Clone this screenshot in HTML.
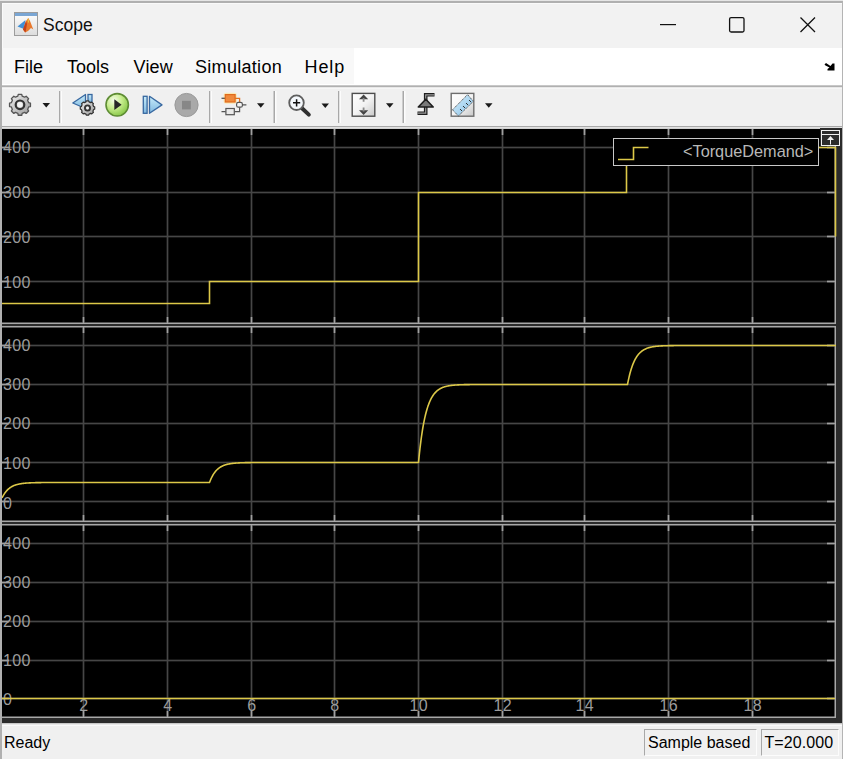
<!DOCTYPE html>
<html><head><meta charset="utf-8">
<style>
html,body{margin:0;padding:0;width:843px;height:759px;overflow:hidden;background:#f0f0f0;}
body{position:relative;font-family:"Liberation Sans",sans-serif;}
.a{position:absolute;}
.t{position:absolute;white-space:nowrap;line-height:1;color:#000;}
.lb{font-family:"Liberation Sans",sans-serif;font-size:16px;letter-spacing:0.4px;fill:#9c9c9c;}
</style></head><body>
<!-- title bar -->
<div class="a" style="left:0;top:0;width:843px;height:48px;background:#f2f2f2"></div>
<div class="a" style="left:0;top:0;width:843px;height:1px;background:#e6e6e6"></div>
<div class="a" style="left:0;top:1px;width:843px;height:2px;background:#b0b0b0"></div>
<div class="a" style="left:2px;top:3px;width:840px;height:1px;background:#fafafa"></div>
<div class="a" style="left:2px;top:3px;width:1px;height:45px;background:#fafafa"></div>
<div class="t" style="left:43px;top:17px;font-size:17.5px;color:#111">Scope</div>


<!-- menu bar -->
<div class="a" style="left:2px;top:48px;width:840px;height:37px;background:#ffffff"></div>
<div class="a" style="left:2px;top:48px;width:352px;height:36px;background:#f8f8f8"></div>
<div class="a" style="left:2px;top:85px;width:840px;height:1px;background:#c8c8c8"></div>
<div class="a" style="left:2px;top:86px;width:840px;height:1px;background:#b0b0b0"></div>
<div class="a" style="left:2px;top:87px;width:840px;height:1px;background:#e8e8e8"></div><div class="a" style="left:2px;top:88px;width:840px;height:1px;background:#f6f6f6"></div>
<div class="t" style="left:14px;top:58px;font-size:18px">File</div>
<div class="t" style="left:67px;top:58px;font-size:18px">Tools</div>
<div class="t" style="left:133.5px;top:58px;font-size:18px;letter-spacing:0.2px">View</div>
<div class="t" style="left:195px;top:58px;font-size:18px;letter-spacing:0.3px">Simulation</div>
<div class="t" style="left:304.5px;top:58px;font-size:18px;letter-spacing:0.9px">Help</div>

<!-- toolbar bottom -->
<div class="a" style="left:2px;top:126px;width:840px;height:1px;background:#a8a8a8"></div>
<div class="a" style="left:2px;top:127px;width:840px;height:1px;background:#e0e0e0"></div>

<svg class="a" style="left:0;top:0" width="843" height="759" viewBox="0 0 843 759">
<defs>
<linearGradient id="gg" x1="0" y1="0" x2="1" y2="1"><stop offset="0" stop-color="#f0f0f0"/><stop offset="1" stop-color="#9a9a9a"/></linearGradient>
<radialGradient id="grn" cx="0.35" cy="0.3" r="0.8"><stop offset="0" stop-color="#f4fce8"/><stop offset="0.45" stop-color="#c6ec8c"/><stop offset="1" stop-color="#7cc03c"/></radialGradient>
<linearGradient id="bl" x1="0" y1="0" x2="0" y2="1"><stop offset="0" stop-color="#c8ecfa"/><stop offset="1" stop-color="#7fb8e0"/></linearGradient>
<linearGradient id="box" x1="0" y1="0" x2="1" y2="1"><stop offset="0" stop-color="#ffffff"/><stop offset="0.5" stop-color="#f4f4f4"/><stop offset="1" stop-color="#c8c8c8"/></linearGradient>
<linearGradient id="mlb" x1="0" y1="0" x2="0" y2="1"><stop offset="0" stop-color="#ffffff"/><stop offset="1" stop-color="#dcdcdc"/></linearGradient>
<linearGradient id="rul" x1="0" y1="0" x2="1" y2="1"><stop offset="0" stop-color="#d8f0fc"/><stop offset="1" stop-color="#86bfe6"/></linearGradient>
</defs>
<g>
<rect x="14.5" y="12.5" width="23" height="23" fill="url(#mlb)" stroke="#9c9c9c" stroke-width="1"/>
<rect x="15" y="13" width="22" height="3" fill="#7aa6d4"/>
<path d="M17.5,26.5 L25.5,20 L24,29 Z" fill="#3f8fd6"/>
<path d="M23,29.5 L26,21 L28.3,18 L30,21 L33.3,29.5 L31,28 L28,31 L25,32.5 Z" fill="#e8782c"/>
<path d="M23,29.5 L26,21 L27,24 L25.5,32.5 Z" fill="#c0401c"/>
<path d="M27.6,19 L28.5,18.5 L29,22 L28,23 Z" fill="#e8d040"/>
</g>
<rect x="660" y="24" width="16" height="1.2" fill="#111"/>
<rect x="729.6" y="17.6" width="14.4" height="14.4" rx="1.5" fill="none" stroke="#111" stroke-width="1.3"/>
<path d="M800.5,17.5 L815,32 M815,17.5 L800.5,32" stroke="#111" stroke-width="1.3"/>
<path d="M824.5,64.5 L826,63 L830.5,66 L832.5,63.5 L834.5,63.5 L834.5,70.5 L827.5,70.5 L827.5,69 L829.5,67.5 L825.5,65.5 Z" fill="#000"/>
<path d="M28.64,102.65 L30.46,103.06 L30.46,106.54 L28.64,106.95 L27.62,109.39 L28.62,110.96 L26.16,113.42 L24.59,112.42 L22.15,113.44 L21.74,115.26 L18.26,115.26 L17.85,113.44 L15.41,112.42 L13.84,113.42 L11.38,110.96 L12.38,109.39 L11.36,106.95 L9.54,106.54 L9.54,103.06 L11.36,102.65 L12.38,100.21 L11.38,98.64 L13.84,96.18 L15.41,97.18 L17.85,96.16 L18.26,94.34 L21.74,94.34 L22.15,96.16 L24.59,97.18 L26.16,96.18 L28.62,98.64 L27.62,100.21 Z" fill="url(#gg)" stroke="#555" stroke-width="1.3" stroke-linejoin="round"/><circle cx="20" cy="104.8" r="4.3" fill="none" stroke="#333" stroke-width="2.2"/><circle cx="20" cy="104.8" r="2.7" fill="#f4f4f4"/>
<path d="M42.5,103 L50.0,103 L46.25,107.5 Z" fill="#1a1a1a"/>
<rect x="59" y="91" width="1.5" height="32" fill="#a8a8a8"/><rect x="60.5" y="91" width="1.5" height="32" fill="#fcfcfc"/>
<path d="M72.8,103 L85.5,94.5 L85.5,108.5 Z" fill="url(#bl)" stroke="#3868a0" stroke-width="1.3" stroke-linejoin="round"/>
<rect x="88" y="94.5" width="4" height="8" fill="url(#bl)" stroke="#3868a0" stroke-width="1.3"/>
<path d="M93.61,106.48 L94.70,106.80 L94.70,109.20 L93.61,109.52 L92.90,111.25 L93.44,112.24 L91.74,113.94 L90.75,113.40 L89.02,114.11 L88.70,115.20 L86.30,115.20 L85.98,114.11 L84.25,113.40 L83.26,113.94 L81.56,112.24 L82.10,111.25 L81.39,109.52 L80.30,109.20 L80.30,106.80 L81.39,106.48 L82.10,104.75 L81.56,103.76 L83.26,102.06 L84.25,102.60 L85.98,101.89 L86.30,100.80 L88.70,100.80 L89.02,101.89 L90.75,102.60 L91.74,102.06 L93.44,103.76 L92.90,104.75 Z" fill="url(#gg)" stroke="#333" stroke-width="1.2" stroke-linejoin="round"/><circle cx="87.5" cy="108" r="2.6" fill="none" stroke="#333" stroke-width="1.8"/><circle cx="87.5" cy="108" r="1.2" fill="#f4f4f4"/>
<circle cx="117.2" cy="104.8" r="11.2" fill="url(#grn)" stroke="#5e8c34" stroke-width="1.6"/>
<path d="M114.3,99.3 L121.6,104.8 L114.3,110 Z" fill="#262626"/>
<rect x="143.3" y="96.3" width="3.8" height="17" fill="url(#bl)" stroke="#3868a0" stroke-width="1.3"/>
<path d="M149.5,96.3 L162,104.9 L149.5,113.3 Z" fill="url(#bl)" stroke="#3868a0" stroke-width="1.3" stroke-linejoin="round"/>
<circle cx="186.5" cy="105" r="11.6" fill="#a9a9a9" stroke="#9a9a9a" stroke-width="1"/>
<rect x="182" y="100.8" width="8.8" height="8.6" fill="#878787"/>
<rect x="209" y="91" width="1.5" height="32" fill="#a8a8a8"/><rect x="210.5" y="91" width="1.5" height="32" fill="#fcfcfc"/>
<rect x="223.5" y="92.8" width="13.5" height="11" rx="3" fill="#fde6a8" opacity="0.8"/>
<path d="M221.5,98.3 L225,98.3" stroke="#555" stroke-width="1.3"/>
<rect x="225.3" y="94.6" width="9.8" height="7.4" fill="#f08a3c" stroke="#e06a1c" stroke-width="1.2"/>
<path d="M235,98.3 L239.6,98.3 L239.6,102.3" fill="none" stroke="#e07020" stroke-width="1.3"/>
<rect x="236.6" y="102.4" width="5.8" height="4.8" rx="1.8" fill="#f4f4f4" stroke="#555" stroke-width="1.2"/>
<path d="M242.4,104.8 L246.4,104.8 M221.5,111.6 L225.8,111.6 M234.5,111.6 L239.6,111.6 L239.6,107.2" fill="none" stroke="#555" stroke-width="1.2"/>
<rect x="225.9" y="108.5" width="8.4" height="6.2" fill="#eaeaea" stroke="#555" stroke-width="1.2"/>
<path d="M257,103.3 L264.5,103.3 L260.75,107.8 Z" fill="#1a1a1a"/>
<rect x="273.5" y="91" width="1.5" height="32" fill="#a8a8a8"/><rect x="275.0" y="91" width="1.5" height="32" fill="#fcfcfc"/>
<path d="M301.5,107.8 L308.8,114.6" stroke="#303030" stroke-width="4" stroke-linecap="round"/>
<circle cx="296.5" cy="102.7" r="7.3" fill="#f4f8fc" stroke="#5e5e5e" stroke-width="1.8"/>
<path d="M293,102.7 L300.2,102.7 M296.6,99.2 L296.6,106.4" stroke="#111" stroke-width="1.5"/>
<path d="M321.5,103.5 L329.0,103.5 L325.25,108.0 Z" fill="#1a1a1a"/>
<rect x="338" y="91" width="1.5" height="32" fill="#a8a8a8"/><rect x="339.5" y="91" width="1.5" height="32" fill="#fcfcfc"/>
<rect x="352.2" y="93.4" width="22.6" height="22.8" fill="url(#box)" stroke="#4e4e4e" stroke-width="1.4"/>
<path d="M359,99.2 L363.6,94.6 L368.2,99.2 Z M359,110.3 L363.6,114.9 L368.2,110.3 Z" fill="#444"/>
<path d="M363.6,98 L363.6,101.8 M363.6,107.6 L363.6,111.5" stroke="#8a8a8a" stroke-width="1.8"/>
<path d="M386,103.3 L393.5,103.3 L389.75,107.8 Z" fill="#1a1a1a"/>
<rect x="402.5" y="91" width="1.5" height="32" fill="#a8a8a8"/><rect x="404.0" y="91" width="1.5" height="32" fill="#fcfcfc"/>
<path d="M417.5,113.2 L425.7,113.2 L425.7,94.8 L434.5,94.8" fill="none" stroke="#1e1e1e" stroke-width="3.6" stroke-linejoin="miter"/>
<path d="M417.5,113.2 L425.7,113.2 L425.7,94.8 L434.5,94.8" fill="none" stroke="#9a9a9a" stroke-width="1.2" stroke-linejoin="miter"/>
<path d="M418.3,107 L425.8,99.2 L433.2,107 Z" fill="#7a7a7a" stroke="#1e1e1e" stroke-width="1.6" stroke-linejoin="round"/>
<rect x="451.2" y="93.4" width="22.6" height="22.8" fill="url(#box)" stroke="#6e6e6e" stroke-width="1.4"/>
<path d="M452.5,109.8 L467.6,94.6 L473.3,101.3 L458.4,116 Z" fill="url(#rul)" stroke="#3c3c3c" stroke-width="0.9" stroke-dasharray="1.2,0.8"/>
<path d="M460,109 L462,111 M463,106 L465,108 M466,103 L468,105 M469,100 L471,102" stroke="#333" stroke-width="1"/>
<path d="M485,103.3 L492.5,103.3 L488.75,107.8 Z" fill="#1a1a1a"/>
</svg>

<!-- status bar -->
<div class="a" style="left:2px;top:723px;width:840px;height:36px;background:#f0f0f0"></div>
<div class="a" style="left:2px;top:723px;width:840px;height:1px;background:#c8c8c8"></div>
<div class="a" style="left:2px;top:724px;width:840px;height:1px;background:#e8e8e8"></div>
<div class="a" style="left:2px;top:725px;width:840px;height:1px;background:#fafafa"></div>
<div class="t" style="left:4px;top:735px;font-size:16px">Ready</div>
<div class="a" style="left:644px;top:729px;width:113px;height:27px;border-top:1px solid #a8a8a8;border-left:1px solid #a8a8a8;border-right:1px solid #fcfcfc;border-bottom:1px solid #fcfcfc;box-sizing:border-box"></div>
<div class="t" style="left:648px;top:735px;font-size:16px">Sample based</div>
<div class="a" style="left:761px;top:729px;width:78px;height:27px;border-top:1px solid #a8a8a8;border-left:1px solid #a8a8a8;border-right:1px solid #fcfcfc;border-bottom:1px solid #fcfcfc;box-sizing:border-box"></div>
<div class="t" style="left:764.5px;top:735px;font-size:16px;letter-spacing:0.1px">T=20.000</div>

<svg class="a" style="left:0;top:0" width="843" height="759" viewBox="0 0 843 759" shape-rendering="crispEdges">
<rect x="2" y="128" width="840" height="595" fill="#2b2b2b"/>
<rect x="2" y="128" width="834" height="1" fill="#d0d0d0"/>
<rect x="2" y="129" width="833" height="194" fill="#000"/>
<rect x="2" y="322.5" width="834" height="1.5" fill="#a8a8a8" shape-rendering="auto"/>
<rect x="834.5" y="128" width="1.5" height="196" fill="#a8a8a8" shape-rendering="auto"/>
<rect x="82.65" y="129" width="1.7" height="194" fill="#464646" shape-rendering="auto"/>
<rect x="82.65" y="129" width="1.7" height="6" fill="#a0a0a0" shape-rendering="auto"/>
<rect x="82.65" y="317" width="1.7" height="6" fill="#a0a0a0" shape-rendering="auto"/>
<rect x="166.65" y="129" width="1.7" height="194" fill="#464646" shape-rendering="auto"/>
<rect x="166.65" y="129" width="1.7" height="6" fill="#a0a0a0" shape-rendering="auto"/>
<rect x="166.65" y="317" width="1.7" height="6" fill="#a0a0a0" shape-rendering="auto"/>
<rect x="250.65" y="129" width="1.7" height="194" fill="#464646" shape-rendering="auto"/>
<rect x="250.65" y="129" width="1.7" height="6" fill="#a0a0a0" shape-rendering="auto"/>
<rect x="250.65" y="317" width="1.7" height="6" fill="#a0a0a0" shape-rendering="auto"/>
<rect x="333.65" y="129" width="1.7" height="194" fill="#464646" shape-rendering="auto"/>
<rect x="333.65" y="129" width="1.7" height="6" fill="#a0a0a0" shape-rendering="auto"/>
<rect x="333.65" y="317" width="1.7" height="6" fill="#a0a0a0" shape-rendering="auto"/>
<rect x="417.65" y="129" width="1.7" height="194" fill="#464646" shape-rendering="auto"/>
<rect x="417.65" y="129" width="1.7" height="6" fill="#a0a0a0" shape-rendering="auto"/>
<rect x="417.65" y="317" width="1.7" height="6" fill="#a0a0a0" shape-rendering="auto"/>
<rect x="501.65" y="129" width="1.7" height="194" fill="#464646" shape-rendering="auto"/>
<rect x="501.65" y="129" width="1.7" height="6" fill="#a0a0a0" shape-rendering="auto"/>
<rect x="501.65" y="317" width="1.7" height="6" fill="#a0a0a0" shape-rendering="auto"/>
<rect x="583.65" y="129" width="1.7" height="194" fill="#464646" shape-rendering="auto"/>
<rect x="583.65" y="129" width="1.7" height="6" fill="#a0a0a0" shape-rendering="auto"/>
<rect x="583.65" y="317" width="1.7" height="6" fill="#a0a0a0" shape-rendering="auto"/>
<rect x="667.65" y="129" width="1.7" height="194" fill="#464646" shape-rendering="auto"/>
<rect x="667.65" y="129" width="1.7" height="6" fill="#a0a0a0" shape-rendering="auto"/>
<rect x="667.65" y="317" width="1.7" height="6" fill="#a0a0a0" shape-rendering="auto"/>
<rect x="751.65" y="129" width="1.7" height="194" fill="#464646" shape-rendering="auto"/>
<rect x="751.65" y="129" width="1.7" height="6" fill="#a0a0a0" shape-rendering="auto"/>
<rect x="751.65" y="317" width="1.7" height="6" fill="#a0a0a0" shape-rendering="auto"/>
<rect x="2" y="146.65" width="833" height="1.7" fill="#464646" shape-rendering="auto"/>
<rect x="2" y="146.65" width="7" height="1.7" fill="#a0a0a0" shape-rendering="auto"/>
<rect x="827" y="146.65" width="8" height="1.7" fill="#a0a0a0" shape-rendering="auto"/>
<rect x="2" y="191.65" width="833" height="1.7" fill="#464646" shape-rendering="auto"/>
<rect x="2" y="191.65" width="7" height="1.7" fill="#a0a0a0" shape-rendering="auto"/>
<rect x="827" y="191.65" width="8" height="1.7" fill="#a0a0a0" shape-rendering="auto"/>
<rect x="2" y="235.65" width="833" height="1.7" fill="#464646" shape-rendering="auto"/>
<rect x="2" y="235.65" width="7" height="1.7" fill="#a0a0a0" shape-rendering="auto"/>
<rect x="827" y="235.65" width="8" height="1.7" fill="#a0a0a0" shape-rendering="auto"/>
<rect x="2" y="280.65" width="833" height="1.7" fill="#464646" shape-rendering="auto"/>
<rect x="2" y="280.65" width="7" height="1.7" fill="#a0a0a0" shape-rendering="auto"/>
<rect x="827" y="280.65" width="8" height="1.7" fill="#a0a0a0" shape-rendering="auto"/>
<text x="3" y="153" class="lb">400</text>
<text x="3" y="198" class="lb">300</text>
<text x="3" y="243" class="lb">200</text>
<text x="3" y="288" class="lb">100</text>
<rect x="2" y="327" width="833" height="194" fill="#000"/>
<rect x="2" y="326" width="834" height="1.5" fill="#a8a8a8" shape-rendering="auto"/>
<rect x="2" y="520.5" width="834" height="1.5" fill="#a8a8a8" shape-rendering="auto"/>
<rect x="834.5" y="326" width="1.5" height="196" fill="#a8a8a8" shape-rendering="auto"/>
<rect x="82.65" y="327" width="1.7" height="194" fill="#464646" shape-rendering="auto"/>
<rect x="82.65" y="327" width="1.7" height="6" fill="#a0a0a0" shape-rendering="auto"/>
<rect x="82.65" y="515" width="1.7" height="6" fill="#a0a0a0" shape-rendering="auto"/>
<rect x="166.65" y="327" width="1.7" height="194" fill="#464646" shape-rendering="auto"/>
<rect x="166.65" y="327" width="1.7" height="6" fill="#a0a0a0" shape-rendering="auto"/>
<rect x="166.65" y="515" width="1.7" height="6" fill="#a0a0a0" shape-rendering="auto"/>
<rect x="250.65" y="327" width="1.7" height="194" fill="#464646" shape-rendering="auto"/>
<rect x="250.65" y="327" width="1.7" height="6" fill="#a0a0a0" shape-rendering="auto"/>
<rect x="250.65" y="515" width="1.7" height="6" fill="#a0a0a0" shape-rendering="auto"/>
<rect x="333.65" y="327" width="1.7" height="194" fill="#464646" shape-rendering="auto"/>
<rect x="333.65" y="327" width="1.7" height="6" fill="#a0a0a0" shape-rendering="auto"/>
<rect x="333.65" y="515" width="1.7" height="6" fill="#a0a0a0" shape-rendering="auto"/>
<rect x="417.65" y="327" width="1.7" height="194" fill="#464646" shape-rendering="auto"/>
<rect x="417.65" y="327" width="1.7" height="6" fill="#a0a0a0" shape-rendering="auto"/>
<rect x="417.65" y="515" width="1.7" height="6" fill="#a0a0a0" shape-rendering="auto"/>
<rect x="501.65" y="327" width="1.7" height="194" fill="#464646" shape-rendering="auto"/>
<rect x="501.65" y="327" width="1.7" height="6" fill="#a0a0a0" shape-rendering="auto"/>
<rect x="501.65" y="515" width="1.7" height="6" fill="#a0a0a0" shape-rendering="auto"/>
<rect x="583.65" y="327" width="1.7" height="194" fill="#464646" shape-rendering="auto"/>
<rect x="583.65" y="327" width="1.7" height="6" fill="#a0a0a0" shape-rendering="auto"/>
<rect x="583.65" y="515" width="1.7" height="6" fill="#a0a0a0" shape-rendering="auto"/>
<rect x="667.65" y="327" width="1.7" height="194" fill="#464646" shape-rendering="auto"/>
<rect x="667.65" y="327" width="1.7" height="6" fill="#a0a0a0" shape-rendering="auto"/>
<rect x="667.65" y="515" width="1.7" height="6" fill="#a0a0a0" shape-rendering="auto"/>
<rect x="751.65" y="327" width="1.7" height="194" fill="#464646" shape-rendering="auto"/>
<rect x="751.65" y="327" width="1.7" height="6" fill="#a0a0a0" shape-rendering="auto"/>
<rect x="751.65" y="515" width="1.7" height="6" fill="#a0a0a0" shape-rendering="auto"/>
<rect x="2" y="344.65" width="833" height="1.7" fill="#464646" shape-rendering="auto"/>
<rect x="2" y="344.65" width="7" height="1.7" fill="#a0a0a0" shape-rendering="auto"/>
<rect x="827" y="344.65" width="8" height="1.7" fill="#a0a0a0" shape-rendering="auto"/>
<rect x="2" y="383.65" width="833" height="1.7" fill="#464646" shape-rendering="auto"/>
<rect x="2" y="383.65" width="7" height="1.7" fill="#a0a0a0" shape-rendering="auto"/>
<rect x="827" y="383.65" width="8" height="1.7" fill="#a0a0a0" shape-rendering="auto"/>
<rect x="2" y="422.65" width="833" height="1.7" fill="#464646" shape-rendering="auto"/>
<rect x="2" y="422.65" width="7" height="1.7" fill="#a0a0a0" shape-rendering="auto"/>
<rect x="827" y="422.65" width="8" height="1.7" fill="#a0a0a0" shape-rendering="auto"/>
<rect x="2" y="461.65" width="833" height="1.7" fill="#464646" shape-rendering="auto"/>
<rect x="2" y="461.65" width="7" height="1.7" fill="#a0a0a0" shape-rendering="auto"/>
<rect x="827" y="461.65" width="8" height="1.7" fill="#a0a0a0" shape-rendering="auto"/>
<rect x="2" y="500.65" width="833" height="1.7" fill="#464646" shape-rendering="auto"/>
<rect x="2" y="500.65" width="7" height="1.7" fill="#a0a0a0" shape-rendering="auto"/>
<rect x="827" y="500.65" width="8" height="1.7" fill="#a0a0a0" shape-rendering="auto"/>
<text x="3" y="351" class="lb">400</text>
<text x="3" y="390" class="lb">300</text>
<text x="3" y="429" class="lb">200</text>
<text x="3" y="469" class="lb">100</text>
<text x="3" y="509" class="lb">0</text>
<rect x="2" y="525" width="833" height="192" fill="#000"/>
<rect x="2" y="524" width="834" height="1.5" fill="#a8a8a8" shape-rendering="auto"/>
<rect x="2" y="716.5" width="834" height="1.5" fill="#a8a8a8" shape-rendering="auto"/>
<rect x="834.5" y="524" width="1.5" height="194" fill="#a8a8a8" shape-rendering="auto"/>
<rect x="82.65" y="525" width="1.7" height="192" fill="#464646" shape-rendering="auto"/>
<rect x="82.65" y="525" width="1.7" height="6" fill="#a0a0a0" shape-rendering="auto"/>
<rect x="82.65" y="711" width="1.7" height="6" fill="#a0a0a0" shape-rendering="auto"/>
<rect x="166.65" y="525" width="1.7" height="192" fill="#464646" shape-rendering="auto"/>
<rect x="166.65" y="525" width="1.7" height="6" fill="#a0a0a0" shape-rendering="auto"/>
<rect x="166.65" y="711" width="1.7" height="6" fill="#a0a0a0" shape-rendering="auto"/>
<rect x="250.65" y="525" width="1.7" height="192" fill="#464646" shape-rendering="auto"/>
<rect x="250.65" y="525" width="1.7" height="6" fill="#a0a0a0" shape-rendering="auto"/>
<rect x="250.65" y="711" width="1.7" height="6" fill="#a0a0a0" shape-rendering="auto"/>
<rect x="333.65" y="525" width="1.7" height="192" fill="#464646" shape-rendering="auto"/>
<rect x="333.65" y="525" width="1.7" height="6" fill="#a0a0a0" shape-rendering="auto"/>
<rect x="333.65" y="711" width="1.7" height="6" fill="#a0a0a0" shape-rendering="auto"/>
<rect x="417.65" y="525" width="1.7" height="192" fill="#464646" shape-rendering="auto"/>
<rect x="417.65" y="525" width="1.7" height="6" fill="#a0a0a0" shape-rendering="auto"/>
<rect x="417.65" y="711" width="1.7" height="6" fill="#a0a0a0" shape-rendering="auto"/>
<rect x="501.65" y="525" width="1.7" height="192" fill="#464646" shape-rendering="auto"/>
<rect x="501.65" y="525" width="1.7" height="6" fill="#a0a0a0" shape-rendering="auto"/>
<rect x="501.65" y="711" width="1.7" height="6" fill="#a0a0a0" shape-rendering="auto"/>
<rect x="583.65" y="525" width="1.7" height="192" fill="#464646" shape-rendering="auto"/>
<rect x="583.65" y="525" width="1.7" height="6" fill="#a0a0a0" shape-rendering="auto"/>
<rect x="583.65" y="711" width="1.7" height="6" fill="#a0a0a0" shape-rendering="auto"/>
<rect x="667.65" y="525" width="1.7" height="192" fill="#464646" shape-rendering="auto"/>
<rect x="667.65" y="525" width="1.7" height="6" fill="#a0a0a0" shape-rendering="auto"/>
<rect x="667.65" y="711" width="1.7" height="6" fill="#a0a0a0" shape-rendering="auto"/>
<rect x="751.65" y="525" width="1.7" height="192" fill="#464646" shape-rendering="auto"/>
<rect x="751.65" y="525" width="1.7" height="6" fill="#a0a0a0" shape-rendering="auto"/>
<rect x="751.65" y="711" width="1.7" height="6" fill="#a0a0a0" shape-rendering="auto"/>
<rect x="2" y="542.65" width="833" height="1.7" fill="#464646" shape-rendering="auto"/>
<rect x="2" y="542.65" width="7" height="1.7" fill="#a0a0a0" shape-rendering="auto"/>
<rect x="827" y="542.65" width="8" height="1.7" fill="#a0a0a0" shape-rendering="auto"/>
<rect x="2" y="581.65" width="833" height="1.7" fill="#464646" shape-rendering="auto"/>
<rect x="2" y="581.65" width="7" height="1.7" fill="#a0a0a0" shape-rendering="auto"/>
<rect x="827" y="581.65" width="8" height="1.7" fill="#a0a0a0" shape-rendering="auto"/>
<rect x="2" y="620.65" width="833" height="1.7" fill="#464646" shape-rendering="auto"/>
<rect x="2" y="620.65" width="7" height="1.7" fill="#a0a0a0" shape-rendering="auto"/>
<rect x="827" y="620.65" width="8" height="1.7" fill="#a0a0a0" shape-rendering="auto"/>
<rect x="2" y="659.65" width="833" height="1.7" fill="#464646" shape-rendering="auto"/>
<rect x="2" y="659.65" width="7" height="1.7" fill="#a0a0a0" shape-rendering="auto"/>
<rect x="827" y="659.65" width="8" height="1.7" fill="#a0a0a0" shape-rendering="auto"/>
<rect x="2" y="697.65" width="833" height="1.7" fill="#464646" shape-rendering="auto"/>
<rect x="2" y="697.65" width="7" height="1.7" fill="#a0a0a0" shape-rendering="auto"/>
<rect x="827" y="697.65" width="8" height="1.7" fill="#a0a0a0" shape-rendering="auto"/>
<text x="3" y="549" class="lb">400</text>
<text x="3" y="588" class="lb">300</text>
<text x="3" y="627" class="lb">200</text>
<text x="3" y="666" class="lb">100</text>
<text x="3" y="705" class="lb">0</text>
<text x="83.85" y="711" class="lb" text-anchor="middle">2</text>
<text x="167.85" y="711" class="lb" text-anchor="middle">4</text>
<text x="251.85" y="711" class="lb" text-anchor="middle">6</text>
<text x="334.85" y="711" class="lb" text-anchor="middle">8</text>
<text x="418.85" y="711" class="lb" text-anchor="middle">10</text>
<text x="502.85" y="711" class="lb" text-anchor="middle">12</text>
<text x="584.85" y="711" class="lb" text-anchor="middle">14</text>
<text x="668.85" y="711" class="lb" text-anchor="middle">16</text>
<text x="752.85" y="711" class="lb" text-anchor="middle">18</text>
<path d="M2.00,303.50 L209.50,303.50 L209.50,281.50 L418.50,281.50 L418.50,192.50 L626.50,192.50 L626.50,147.50 L835.50,147.50 L835.50,236.50" fill="none" stroke="#dcc848" stroke-width="1.6" shape-rendering="auto"/>
<path d="M2.00,498.01 L2.50,497.00 L3.00,496.05 L3.50,495.17 L4.00,494.34 L4.50,493.57 L5.00,492.84 L5.50,492.17 L6.00,491.54 L6.50,490.95 L7.00,490.39 L7.50,489.88 L8.00,489.40 L8.50,488.95 L9.00,488.52 L9.50,488.13 L10.00,487.76 L10.50,487.42 L11.00,487.10 L11.50,486.80 L12.00,486.52 L12.50,486.25 L13.00,486.01 L13.50,485.78 L14.00,485.57 L14.50,485.36 L15.00,485.18 L15.50,485.00 L16.00,484.84 L16.50,484.69 L17.00,484.54 L17.50,484.41 L18.00,484.29 L18.50,484.17 L19.00,484.06 L19.50,483.96 L20.00,483.86 L20.50,483.77 L21.00,483.69 L21.50,483.61 L22.00,483.54 L22.50,483.47 L23.00,483.41 L23.50,483.35 L24.00,483.29 L24.50,483.24 L25.00,483.19 L25.50,483.15 L26.00,483.11 L26.50,483.07 L27.00,483.03 L27.50,482.99 L28.00,482.96 L28.50,482.93 L29.00,482.90 L29.50,482.88 L30.00,482.85 L30.50,482.83 L31.00,482.81 L31.50,482.79 L32.00,482.77 L32.50,482.75 L33.00,482.74 L33.50,482.72 L34.00,482.71 L34.50,482.69 L35.00,482.68 L35.50,482.67 L36.00,482.66 L36.50,482.65 L37.00,482.64 L37.50,482.63 L38.00,482.62 L38.50,482.61 L39.00,482.60 L39.50,482.60 L40.00,482.59 L40.50,482.59 L41.00,482.58 L41.50,482.57 L42.00,482.57 L42.50,482.57 L43.00,482.56 L43.50,482.56 L44.00,482.55 L44.50,482.55 L45.00,482.55 L45.50,482.54 L46.00,482.54 L46.50,482.54 L47.00,482.54 L47.50,482.53 L48.00,482.53 L48.50,482.53 L49.00,482.53 L49.50,482.53 L50.00,482.52 L50.50,482.52 L51.00,482.52 L51.50,482.52 L52.00,482.52 L52.50,482.52 L53.00,482.52 L53.50,482.51 L54.00,482.51 L54.50,482.51 L55.00,482.51 L55.50,482.51 L56.00,482.51 L56.50,482.51 L57.00,482.51 L57.50,482.51 L58.00,482.51 L58.50,482.51 L59.00,482.51 L59.50,482.51 L60.00,482.51 L60.50,482.51 L61.00,482.51 L61.50,482.50 L62.00,482.50 L62.50,482.50 L63.00,482.50 L63.50,482.50 L64.00,482.50 L64.50,482.50 L65.00,482.50 L65.50,482.50 L66.00,482.50 L66.50,482.50 L67.00,482.50 L67.50,482.50 L68.00,482.50 L68.50,482.50 L69.00,482.50 L69.50,482.50 L70.00,482.50 L70.50,482.50 L71.00,482.50 L71.50,482.50 L72.00,482.50 L72.50,482.50 L73.00,482.50 L73.50,482.50 L74.00,482.50 L74.50,482.50 L75.00,482.50 L75.50,482.50 L76.00,482.50 L76.50,482.50 L77.00,482.50 L77.50,482.50 L78.00,482.50 L78.50,482.50 L79.00,482.50 L79.50,482.50 L80.00,482.50 L80.50,482.50 L81.00,482.50 L81.50,482.50 L82.00,482.50 L82.50,482.50 L83.00,482.50 L83.50,482.50 L84.00,482.50 L84.50,482.50 L85.00,482.50 L85.50,482.50 L86.00,482.50 L86.50,482.50 L87.00,482.50 L87.50,482.50 L88.00,482.50 L88.50,482.50 L89.00,482.50 L89.50,482.50 L90.00,482.50 L90.50,482.50 L91.00,482.50 L91.50,482.50 L92.00,482.50 L92.50,482.50 L93.00,482.50 L93.50,482.50 L94.00,482.50 L94.50,482.50 L95.00,482.50 L95.50,482.50 L96.00,482.50 L96.50,482.50 L97.00,482.50 L97.50,482.50 L98.00,482.50 L98.50,482.50 L99.00,482.50 L99.50,482.50 L100.00,482.50 L100.50,482.50 L101.00,482.50 L101.50,482.50 L102.00,482.50 L102.50,482.50 L103.00,482.50 L103.50,482.50 L104.00,482.50 L104.50,482.50 L105.00,482.50 L105.50,482.50 L106.00,482.50 L106.50,482.50 L107.00,482.50 L107.50,482.50 L108.00,482.50 L108.50,482.50 L109.00,482.50 L109.50,482.50 L110.00,482.50 L110.50,482.50 L111.00,482.50 L111.50,482.50 L112.00,482.50 L112.50,482.50 L113.00,482.50 L113.50,482.50 L114.00,482.50 L114.50,482.50 L115.00,482.50 L115.50,482.50 L116.00,482.50 L116.50,482.50 L117.00,482.50 L117.50,482.50 L118.00,482.50 L118.50,482.50 L119.00,482.50 L119.50,482.50 L120.00,482.50 L120.50,482.50 L121.00,482.50 L121.50,482.50 L122.00,482.50 L122.50,482.50 L123.00,482.50 L123.50,482.50 L124.00,482.50 L124.50,482.50 L125.00,482.50 L125.50,482.50 L126.00,482.50 L126.50,482.50 L127.00,482.50 L127.50,482.50 L128.00,482.50 L128.50,482.50 L129.00,482.50 L129.50,482.50 L130.00,482.50 L130.50,482.50 L131.00,482.50 L131.50,482.50 L132.00,482.50 L132.50,482.50 L133.00,482.50 L133.50,482.50 L134.00,482.50 L134.50,482.50 L135.00,482.50 L135.50,482.50 L136.00,482.50 L136.50,482.50 L137.00,482.50 L137.50,482.50 L138.00,482.50 L138.50,482.50 L139.00,482.50 L139.50,482.50 L140.00,482.50 L140.50,482.50 L141.00,482.50 L141.50,482.50 L142.00,482.50 L142.50,482.50 L143.00,482.50 L143.50,482.50 L144.00,482.50 L144.50,482.50 L145.00,482.50 L145.50,482.50 L146.00,482.50 L146.50,482.50 L147.00,482.50 L147.50,482.50 L148.00,482.50 L148.50,482.50 L149.00,482.50 L149.50,482.50 L150.00,482.50 L150.50,482.50 L151.00,482.50 L151.50,482.50 L152.00,482.50 L152.50,482.50 L153.00,482.50 L153.50,482.50 L154.00,482.50 L154.50,482.50 L155.00,482.50 L155.50,482.50 L156.00,482.50 L156.50,482.50 L157.00,482.50 L157.50,482.50 L158.00,482.50 L158.50,482.50 L159.00,482.50 L159.50,482.50 L160.00,482.50 L160.50,482.50 L161.00,482.50 L161.50,482.50 L162.00,482.50 L162.50,482.50 L163.00,482.50 L163.50,482.50 L164.00,482.50 L164.50,482.50 L165.00,482.50 L165.50,482.50 L166.00,482.50 L166.50,482.50 L167.00,482.50 L167.50,482.50 L168.00,482.50 L168.50,482.50 L169.00,482.50 L169.50,482.50 L170.00,482.50 L170.50,482.50 L171.00,482.50 L171.50,482.50 L172.00,482.50 L172.50,482.50 L173.00,482.50 L173.50,482.50 L174.00,482.50 L174.50,482.50 L175.00,482.50 L175.50,482.50 L176.00,482.50 L176.50,482.50 L177.00,482.50 L177.50,482.50 L178.00,482.50 L178.50,482.50 L179.00,482.50 L179.50,482.50 L180.00,482.50 L180.50,482.50 L181.00,482.50 L181.50,482.50 L182.00,482.50 L182.50,482.50 L183.00,482.50 L183.50,482.50 L184.00,482.50 L184.50,482.50 L185.00,482.50 L185.50,482.50 L186.00,482.50 L186.50,482.50 L187.00,482.50 L187.50,482.50 L188.00,482.50 L188.50,482.50 L189.00,482.50 L189.50,482.50 L190.00,482.50 L190.50,482.50 L191.00,482.50 L191.50,482.50 L192.00,482.50 L192.50,482.50 L193.00,482.50 L193.50,482.50 L194.00,482.50 L194.50,482.50 L195.00,482.50 L195.50,482.50 L196.00,482.50 L196.50,482.50 L197.00,482.50 L197.50,482.50 L198.00,482.50 L198.50,482.50 L199.00,482.50 L199.50,482.50 L200.00,482.50 L200.50,482.50 L201.00,482.50 L201.50,482.50 L202.00,482.50 L202.50,482.50 L203.00,482.50 L203.50,482.50 L204.00,482.50 L204.50,482.50 L205.00,482.50 L205.50,482.50 L206.00,482.50 L206.50,482.50 L207.00,482.50 L207.50,482.50 L208.00,482.50 L208.50,482.50 L209.00,482.50 L209.50,482.50 L209.50,482.50 L210.00,481.19 L210.50,479.97 L211.00,478.83 L211.50,477.76 L212.00,476.77 L212.50,475.83 L213.00,474.96 L213.50,474.15 L214.00,473.39 L214.50,472.68 L215.00,472.01 L215.50,471.39 L216.00,470.81 L216.50,470.27 L217.00,469.76 L217.50,469.28 L218.00,468.84 L218.50,468.43 L219.00,468.04 L219.50,467.68 L220.00,467.34 L220.50,467.02 L221.00,466.73 L221.50,466.45 L222.00,466.19 L222.50,465.95 L223.00,465.73 L223.50,465.52 L224.00,465.32 L224.50,465.13 L225.00,464.96 L225.50,464.80 L226.00,464.65 L226.50,464.51 L227.00,464.38 L227.50,464.26 L228.00,464.14 L228.50,464.03 L229.00,463.93 L229.50,463.84 L230.00,463.75 L230.50,463.67 L231.00,463.59 L231.50,463.52 L232.00,463.46 L232.50,463.39 L233.00,463.34 L233.50,463.28 L234.00,463.23 L234.50,463.18 L235.00,463.14 L235.50,463.10 L236.00,463.06 L236.50,463.02 L237.00,462.99 L237.50,462.95 L238.00,462.93 L238.50,462.90 L239.00,462.87 L239.50,462.85 L240.00,462.82 L240.50,462.80 L241.00,462.78 L241.50,462.76 L242.00,462.75 L242.50,462.73 L243.00,462.72 L243.50,462.70 L244.00,462.69 L244.50,462.68 L245.00,462.67 L245.50,462.65 L246.00,462.64 L246.50,462.63 L247.00,462.63 L247.50,462.62 L248.00,462.61 L248.50,462.60 L249.00,462.60 L249.50,462.59 L250.00,462.58 L250.50,462.58 L251.00,462.57 L251.50,462.57 L252.00,462.56 L252.50,462.56 L253.00,462.56 L253.50,462.55 L254.00,462.55 L254.50,462.55 L255.00,462.54 L255.50,462.54 L256.00,462.54 L256.50,462.53 L257.00,462.53 L257.50,462.53 L258.00,462.53 L258.50,462.53 L259.00,462.52 L259.50,462.52 L260.00,462.52 L260.50,462.52 L261.00,462.52 L261.50,462.52 L262.00,462.52 L262.50,462.52 L263.00,462.51 L263.50,462.51 L264.00,462.51 L264.50,462.51 L265.00,462.51 L265.50,462.51 L266.00,462.51 L266.50,462.51 L267.00,462.51 L267.50,462.51 L268.00,462.51 L268.50,462.51 L269.00,462.51 L269.50,462.51 L270.00,462.51 L270.50,462.51 L271.00,462.50 L271.50,462.50 L272.00,462.50 L272.50,462.50 L273.00,462.50 L273.50,462.50 L274.00,462.50 L274.50,462.50 L275.00,462.50 L275.50,462.50 L276.00,462.50 L276.50,462.50 L277.00,462.50 L277.50,462.50 L278.00,462.50 L278.50,462.50 L279.00,462.50 L279.50,462.50 L280.00,462.50 L280.50,462.50 L281.00,462.50 L281.50,462.50 L282.00,462.50 L282.50,462.50 L283.00,462.50 L283.50,462.50 L284.00,462.50 L284.50,462.50 L285.00,462.50 L285.50,462.50 L286.00,462.50 L286.50,462.50 L287.00,462.50 L287.50,462.50 L288.00,462.50 L288.50,462.50 L289.00,462.50 L289.50,462.50 L290.00,462.50 L290.50,462.50 L291.00,462.50 L291.50,462.50 L292.00,462.50 L292.50,462.50 L293.00,462.50 L293.50,462.50 L294.00,462.50 L294.50,462.50 L295.00,462.50 L295.50,462.50 L296.00,462.50 L296.50,462.50 L297.00,462.50 L297.50,462.50 L298.00,462.50 L298.50,462.50 L299.00,462.50 L299.50,462.50 L300.00,462.50 L300.50,462.50 L301.00,462.50 L301.50,462.50 L302.00,462.50 L302.50,462.50 L303.00,462.50 L303.50,462.50 L304.00,462.50 L304.50,462.50 L305.00,462.50 L305.50,462.50 L306.00,462.50 L306.50,462.50 L307.00,462.50 L307.50,462.50 L308.00,462.50 L308.50,462.50 L309.00,462.50 L309.50,462.50 L310.00,462.50 L310.50,462.50 L311.00,462.50 L311.50,462.50 L312.00,462.50 L312.50,462.50 L313.00,462.50 L313.50,462.50 L314.00,462.50 L314.50,462.50 L315.00,462.50 L315.50,462.50 L316.00,462.50 L316.50,462.50 L317.00,462.50 L317.50,462.50 L318.00,462.50 L318.50,462.50 L319.00,462.50 L319.50,462.50 L320.00,462.50 L320.50,462.50 L321.00,462.50 L321.50,462.50 L322.00,462.50 L322.50,462.50 L323.00,462.50 L323.50,462.50 L324.00,462.50 L324.50,462.50 L325.00,462.50 L325.50,462.50 L326.00,462.50 L326.50,462.50 L327.00,462.50 L327.50,462.50 L328.00,462.50 L328.50,462.50 L329.00,462.50 L329.50,462.50 L330.00,462.50 L330.50,462.50 L331.00,462.50 L331.50,462.50 L332.00,462.50 L332.50,462.50 L333.00,462.50 L333.50,462.50 L334.00,462.50 L334.50,462.50 L335.00,462.50 L335.50,462.50 L336.00,462.50 L336.50,462.50 L337.00,462.50 L337.50,462.50 L338.00,462.50 L338.50,462.50 L339.00,462.50 L339.50,462.50 L340.00,462.50 L340.50,462.50 L341.00,462.50 L341.50,462.50 L342.00,462.50 L342.50,462.50 L343.00,462.50 L343.50,462.50 L344.00,462.50 L344.50,462.50 L345.00,462.50 L345.50,462.50 L346.00,462.50 L346.50,462.50 L347.00,462.50 L347.50,462.50 L348.00,462.50 L348.50,462.50 L349.00,462.50 L349.50,462.50 L350.00,462.50 L350.50,462.50 L351.00,462.50 L351.50,462.50 L352.00,462.50 L352.50,462.50 L353.00,462.50 L353.50,462.50 L354.00,462.50 L354.50,462.50 L355.00,462.50 L355.50,462.50 L356.00,462.50 L356.50,462.50 L357.00,462.50 L357.50,462.50 L358.00,462.50 L358.50,462.50 L359.00,462.50 L359.50,462.50 L360.00,462.50 L360.50,462.50 L361.00,462.50 L361.50,462.50 L362.00,462.50 L362.50,462.50 L363.00,462.50 L363.50,462.50 L364.00,462.50 L364.50,462.50 L365.00,462.50 L365.50,462.50 L366.00,462.50 L366.50,462.50 L367.00,462.50 L367.50,462.50 L368.00,462.50 L368.50,462.50 L369.00,462.50 L369.50,462.50 L370.00,462.50 L370.50,462.50 L371.00,462.50 L371.50,462.50 L372.00,462.50 L372.50,462.50 L373.00,462.50 L373.50,462.50 L374.00,462.50 L374.50,462.50 L375.00,462.50 L375.50,462.50 L376.00,462.50 L376.50,462.50 L377.00,462.50 L377.50,462.50 L378.00,462.50 L378.50,462.50 L379.00,462.50 L379.50,462.50 L380.00,462.50 L380.50,462.50 L381.00,462.50 L381.50,462.50 L382.00,462.50 L382.50,462.50 L383.00,462.50 L383.50,462.50 L384.00,462.50 L384.50,462.50 L385.00,462.50 L385.50,462.50 L386.00,462.50 L386.50,462.50 L387.00,462.50 L387.50,462.50 L388.00,462.50 L388.50,462.50 L389.00,462.50 L389.50,462.50 L390.00,462.50 L390.50,462.50 L391.00,462.50 L391.50,462.50 L392.00,462.50 L392.50,462.50 L393.00,462.50 L393.50,462.50 L394.00,462.50 L394.50,462.50 L395.00,462.50 L395.50,462.50 L396.00,462.50 L396.50,462.50 L397.00,462.50 L397.50,462.50 L398.00,462.50 L398.50,462.50 L399.00,462.50 L399.50,462.50 L400.00,462.50 L400.50,462.50 L401.00,462.50 L401.50,462.50 L402.00,462.50 L402.50,462.50 L403.00,462.50 L403.50,462.50 L404.00,462.50 L404.50,462.50 L405.00,462.50 L405.50,462.50 L406.00,462.50 L406.50,462.50 L407.00,462.50 L407.50,462.50 L408.00,462.50 L408.50,462.50 L409.00,462.50 L409.50,462.50 L410.00,462.50 L410.50,462.50 L411.00,462.50 L411.50,462.50 L412.00,462.50 L412.50,462.50 L413.00,462.50 L413.50,462.50 L414.00,462.50 L414.50,462.50 L415.00,462.50 L415.50,462.50 L416.00,462.50 L416.50,462.50 L417.00,462.50 L417.50,462.50 L418.00,462.50 L418.50,462.50 L418.50,462.50 L419.00,457.40 L419.50,452.64 L420.00,448.19 L420.50,444.03 L421.00,440.14 L421.50,436.50 L422.00,433.11 L422.50,429.93 L423.00,426.96 L423.50,424.19 L424.00,421.59 L424.50,419.17 L425.00,416.91 L425.50,414.79 L426.00,412.81 L426.50,410.96 L427.00,409.23 L427.50,407.62 L428.00,406.11 L428.50,404.69 L429.00,403.37 L429.50,402.14 L430.00,400.99 L430.50,399.91 L431.00,398.90 L431.50,397.96 L432.00,397.08 L432.50,396.26 L433.00,395.49 L433.50,394.77 L434.00,394.10 L434.50,393.48 L435.00,392.89 L435.50,392.34 L436.00,391.83 L436.50,391.35 L437.00,390.90 L437.50,390.48 L438.00,390.09 L438.50,389.73 L439.00,389.39 L439.50,389.07 L440.00,388.77 L440.50,388.49 L441.00,388.23 L441.50,387.99 L442.00,387.76 L442.50,387.54 L443.00,387.35 L443.50,387.16 L444.00,386.99 L444.50,386.82 L445.00,386.67 L445.50,386.53 L446.00,386.40 L446.50,386.27 L447.00,386.16 L447.50,386.05 L448.00,385.95 L448.50,385.85 L449.00,385.77 L449.50,385.68 L450.00,385.61 L450.50,385.53 L451.00,385.47 L451.50,385.40 L452.00,385.34 L452.50,385.29 L453.00,385.24 L453.50,385.19 L454.00,385.14 L454.50,385.10 L455.00,385.06 L455.50,385.03 L456.00,384.99 L456.50,384.96 L457.00,384.93 L457.50,384.90 L458.00,384.87 L458.50,384.85 L459.00,384.83 L459.50,384.81 L460.00,384.79 L460.50,384.77 L461.00,384.75 L461.50,384.73 L462.00,384.72 L462.50,384.70 L463.00,384.69 L463.50,384.68 L464.00,384.67 L464.50,384.66 L465.00,384.65 L465.50,384.64 L466.00,384.63 L466.50,384.62 L467.00,384.61 L467.50,384.60 L468.00,384.60 L468.50,384.59 L469.00,384.58 L469.50,384.58 L470.00,384.57 L470.50,384.57 L471.00,384.56 L471.50,384.56 L472.00,384.56 L472.50,384.55 L473.00,384.55 L473.50,384.55 L474.00,384.54 L474.50,384.54 L475.00,384.54 L475.50,384.54 L476.00,384.53 L476.50,384.53 L477.00,384.53 L477.50,384.53 L478.00,384.53 L478.50,384.52 L479.00,384.52 L479.50,384.52 L480.00,384.52 L480.50,384.52 L481.00,384.52 L481.50,384.52 L482.00,384.51 L482.50,384.51 L483.00,384.51 L483.50,384.51 L484.00,384.51 L484.50,384.51 L485.00,384.51 L485.50,384.51 L486.00,384.51 L486.50,384.51 L487.00,384.51 L487.50,384.51 L488.00,384.51 L488.50,384.51 L489.00,384.51 L489.50,384.51 L490.00,384.50 L490.50,384.50 L491.00,384.50 L491.50,384.50 L492.00,384.50 L492.50,384.50 L493.00,384.50 L493.50,384.50 L494.00,384.50 L494.50,384.50 L495.00,384.50 L495.50,384.50 L496.00,384.50 L496.50,384.50 L497.00,384.50 L497.50,384.50 L498.00,384.50 L498.50,384.50 L499.00,384.50 L499.50,384.50 L500.00,384.50 L500.50,384.50 L501.00,384.50 L501.50,384.50 L502.00,384.50 L502.50,384.50 L503.00,384.50 L503.50,384.50 L504.00,384.50 L504.50,384.50 L505.00,384.50 L505.50,384.50 L506.00,384.50 L506.50,384.50 L507.00,384.50 L507.50,384.50 L508.00,384.50 L508.50,384.50 L509.00,384.50 L509.50,384.50 L510.00,384.50 L510.50,384.50 L511.00,384.50 L511.50,384.50 L512.00,384.50 L512.50,384.50 L513.00,384.50 L513.50,384.50 L514.00,384.50 L514.50,384.50 L515.00,384.50 L515.50,384.50 L516.00,384.50 L516.50,384.50 L517.00,384.50 L517.50,384.50 L518.00,384.50 L518.50,384.50 L519.00,384.50 L519.50,384.50 L520.00,384.50 L520.50,384.50 L521.00,384.50 L521.50,384.50 L522.00,384.50 L522.50,384.50 L523.00,384.50 L523.50,384.50 L524.00,384.50 L524.50,384.50 L525.00,384.50 L525.50,384.50 L526.00,384.50 L526.50,384.50 L527.00,384.50 L527.50,384.50 L528.00,384.50 L528.50,384.50 L529.00,384.50 L529.50,384.50 L530.00,384.50 L530.50,384.50 L531.00,384.50 L531.50,384.50 L532.00,384.50 L532.50,384.50 L533.00,384.50 L533.50,384.50 L534.00,384.50 L534.50,384.50 L535.00,384.50 L535.50,384.50 L536.00,384.50 L536.50,384.50 L537.00,384.50 L537.50,384.50 L538.00,384.50 L538.50,384.50 L539.00,384.50 L539.50,384.50 L540.00,384.50 L540.50,384.50 L541.00,384.50 L541.50,384.50 L542.00,384.50 L542.50,384.50 L543.00,384.50 L543.50,384.50 L544.00,384.50 L544.50,384.50 L545.00,384.50 L545.50,384.50 L546.00,384.50 L546.50,384.50 L547.00,384.50 L547.50,384.50 L548.00,384.50 L548.50,384.50 L549.00,384.50 L549.50,384.50 L550.00,384.50 L550.50,384.50 L551.00,384.50 L551.50,384.50 L552.00,384.50 L552.50,384.50 L553.00,384.50 L553.50,384.50 L554.00,384.50 L554.50,384.50 L555.00,384.50 L555.50,384.50 L556.00,384.50 L556.50,384.50 L557.00,384.50 L557.50,384.50 L558.00,384.50 L558.50,384.50 L559.00,384.50 L559.50,384.50 L560.00,384.50 L560.50,384.50 L561.00,384.50 L561.50,384.50 L562.00,384.50 L562.50,384.50 L563.00,384.50 L563.50,384.50 L564.00,384.50 L564.50,384.50 L565.00,384.50 L565.50,384.50 L566.00,384.50 L566.50,384.50 L567.00,384.50 L567.50,384.50 L568.00,384.50 L568.50,384.50 L569.00,384.50 L569.50,384.50 L570.00,384.50 L570.50,384.50 L571.00,384.50 L571.50,384.50 L572.00,384.50 L572.50,384.50 L573.00,384.50 L573.50,384.50 L574.00,384.50 L574.50,384.50 L575.00,384.50 L575.50,384.50 L576.00,384.50 L576.50,384.50 L577.00,384.50 L577.50,384.50 L578.00,384.50 L578.50,384.50 L579.00,384.50 L579.50,384.50 L580.00,384.50 L580.50,384.50 L581.00,384.50 L581.50,384.50 L582.00,384.50 L582.50,384.50 L583.00,384.50 L583.50,384.50 L584.00,384.50 L584.50,384.50 L585.00,384.50 L585.50,384.50 L586.00,384.50 L586.50,384.50 L587.00,384.50 L587.50,384.50 L588.00,384.50 L588.50,384.50 L589.00,384.50 L589.50,384.50 L590.00,384.50 L590.50,384.50 L591.00,384.50 L591.50,384.50 L592.00,384.50 L592.50,384.50 L593.00,384.50 L593.50,384.50 L594.00,384.50 L594.50,384.50 L595.00,384.50 L595.50,384.50 L596.00,384.50 L596.50,384.50 L597.00,384.50 L597.50,384.50 L598.00,384.50 L598.50,384.50 L599.00,384.50 L599.50,384.50 L600.00,384.50 L600.50,384.50 L601.00,384.50 L601.50,384.50 L602.00,384.50 L602.50,384.50 L603.00,384.50 L603.50,384.50 L604.00,384.50 L604.50,384.50 L605.00,384.50 L605.50,384.50 L606.00,384.50 L606.50,384.50 L607.00,384.50 L607.50,384.50 L608.00,384.50 L608.50,384.50 L609.00,384.50 L609.50,384.50 L610.00,384.50 L610.50,384.50 L611.00,384.50 L611.50,384.50 L612.00,384.50 L612.50,384.50 L613.00,384.50 L613.50,384.50 L614.00,384.50 L614.50,384.50 L615.00,384.50 L615.50,384.50 L616.00,384.50 L616.50,384.50 L617.00,384.50 L617.50,384.50 L618.00,384.50 L618.50,384.50 L619.00,384.50 L619.50,384.50 L620.00,384.50 L620.50,384.50 L621.00,384.50 L621.50,384.50 L622.00,384.50 L622.50,384.50 L623.00,384.50 L623.50,384.50 L624.00,384.50 L624.50,384.50 L625.00,384.50 L625.50,384.50 L626.00,384.50 L626.50,384.50 L627.00,384.50 L627.50,384.50 L627.50,384.50 L628.00,381.95 L628.50,379.57 L629.00,377.34 L629.50,375.26 L630.00,373.32 L630.50,371.50 L631.00,369.80 L631.50,368.21 L632.00,366.73 L632.50,365.34 L633.00,364.05 L633.50,362.84 L634.00,361.70 L634.50,360.64 L635.00,359.65 L635.50,358.73 L636.00,357.87 L636.50,357.06 L637.00,356.30 L637.50,355.60 L638.00,354.94 L638.50,354.32 L639.00,353.74 L639.50,353.21 L640.00,352.70 L640.50,352.23 L641.00,351.79 L641.50,351.38 L642.00,351.00 L642.50,350.64 L643.00,350.30 L643.50,349.99 L644.00,349.69 L644.50,349.42 L645.00,349.16 L645.50,348.93 L646.00,348.70 L646.50,348.49 L647.00,348.30 L647.50,348.11 L648.00,347.94 L648.50,347.78 L649.00,347.63 L649.50,347.49 L650.00,347.36 L650.50,347.24 L651.00,347.13 L651.50,347.02 L652.00,346.92 L652.50,346.83 L653.00,346.74 L653.50,346.66 L654.00,346.59 L654.50,346.52 L655.00,346.45 L655.50,346.39 L656.00,346.33 L656.50,346.27 L657.00,346.22 L657.50,346.18 L658.00,346.13 L658.50,346.09 L659.00,346.05 L659.50,346.02 L660.00,345.98 L660.50,345.95 L661.00,345.92 L661.50,345.89 L662.00,345.87 L662.50,345.84 L663.00,345.82 L663.50,345.80 L664.00,345.78 L664.50,345.76 L665.00,345.75 L665.50,345.73 L666.00,345.71 L666.50,345.70 L667.00,345.69 L667.50,345.68 L668.00,345.66 L668.50,345.65 L669.00,345.64 L669.50,345.63 L670.00,345.62 L670.50,345.62 L671.00,345.61 L671.50,345.60 L672.00,345.60 L672.50,345.59 L673.00,345.58 L673.50,345.58 L674.00,345.57 L674.50,345.57 L675.00,345.56 L675.50,345.56 L676.00,345.56 L676.50,345.55 L677.00,345.55 L677.50,345.55 L678.00,345.54 L678.50,345.54 L679.00,345.54 L679.50,345.53 L680.00,345.53 L680.50,345.53 L681.00,345.53 L681.50,345.53 L682.00,345.52 L682.50,345.52 L683.00,345.52 L683.50,345.52 L684.00,345.52 L684.50,345.52 L685.00,345.52 L685.50,345.52 L686.00,345.51 L686.50,345.51 L687.00,345.51 L687.50,345.51 L688.00,345.51 L688.50,345.51 L689.00,345.51 L689.50,345.51 L690.00,345.51 L690.50,345.51 L691.00,345.51 L691.50,345.51 L692.00,345.51 L692.50,345.51 L693.00,345.51 L693.50,345.51 L694.00,345.50 L694.50,345.50 L695.00,345.50 L695.50,345.50 L696.00,345.50 L696.50,345.50 L697.00,345.50 L697.50,345.50 L698.00,345.50 L698.50,345.50 L699.00,345.50 L699.50,345.50 L700.00,345.50 L700.50,345.50 L701.00,345.50 L701.50,345.50 L702.00,345.50 L702.50,345.50 L703.00,345.50 L703.50,345.50 L704.00,345.50 L704.50,345.50 L705.00,345.50 L705.50,345.50 L706.00,345.50 L706.50,345.50 L707.00,345.50 L707.50,345.50 L708.00,345.50 L708.50,345.50 L709.00,345.50 L709.50,345.50 L710.00,345.50 L710.50,345.50 L711.00,345.50 L711.50,345.50 L712.00,345.50 L712.50,345.50 L713.00,345.50 L713.50,345.50 L714.00,345.50 L714.50,345.50 L715.00,345.50 L715.50,345.50 L716.00,345.50 L716.50,345.50 L717.00,345.50 L717.50,345.50 L718.00,345.50 L718.50,345.50 L719.00,345.50 L719.50,345.50 L720.00,345.50 L720.50,345.50 L721.00,345.50 L721.50,345.50 L722.00,345.50 L722.50,345.50 L723.00,345.50 L723.50,345.50 L724.00,345.50 L724.50,345.50 L725.00,345.50 L725.50,345.50 L726.00,345.50 L726.50,345.50 L727.00,345.50 L727.50,345.50 L728.00,345.50 L728.50,345.50 L729.00,345.50 L729.50,345.50 L730.00,345.50 L730.50,345.50 L731.00,345.50 L731.50,345.50 L732.00,345.50 L732.50,345.50 L733.00,345.50 L733.50,345.50 L734.00,345.50 L734.50,345.50 L735.00,345.50 L735.50,345.50 L736.00,345.50 L736.50,345.50 L737.00,345.50 L737.50,345.50 L738.00,345.50 L738.50,345.50 L739.00,345.50 L739.50,345.50 L740.00,345.50 L740.50,345.50 L741.00,345.50 L741.50,345.50 L742.00,345.50 L742.50,345.50 L743.00,345.50 L743.50,345.50 L744.00,345.50 L744.50,345.50 L745.00,345.50 L745.50,345.50 L746.00,345.50 L746.50,345.50 L747.00,345.50 L747.50,345.50 L748.00,345.50 L748.50,345.50 L749.00,345.50 L749.50,345.50 L750.00,345.50 L750.50,345.50 L751.00,345.50 L751.50,345.50 L752.00,345.50 L752.50,345.50 L753.00,345.50 L753.50,345.50 L754.00,345.50 L754.50,345.50 L755.00,345.50 L755.50,345.50 L756.00,345.50 L756.50,345.50 L757.00,345.50 L757.50,345.50 L758.00,345.50 L758.50,345.50 L759.00,345.50 L759.50,345.50 L760.00,345.50 L760.50,345.50 L761.00,345.50 L761.50,345.50 L762.00,345.50 L762.50,345.50 L763.00,345.50 L763.50,345.50 L764.00,345.50 L764.50,345.50 L765.00,345.50 L765.50,345.50 L766.00,345.50 L766.50,345.50 L767.00,345.50 L767.50,345.50 L768.00,345.50 L768.50,345.50 L769.00,345.50 L769.50,345.50 L770.00,345.50 L770.50,345.50 L771.00,345.50 L771.50,345.50 L772.00,345.50 L772.50,345.50 L773.00,345.50 L773.50,345.50 L774.00,345.50 L774.50,345.50 L775.00,345.50 L775.50,345.50 L776.00,345.50 L776.50,345.50 L777.00,345.50 L777.50,345.50 L778.00,345.50 L778.50,345.50 L779.00,345.50 L779.50,345.50 L780.00,345.50 L780.50,345.50 L781.00,345.50 L781.50,345.50 L782.00,345.50 L782.50,345.50 L783.00,345.50 L783.50,345.50 L784.00,345.50 L784.50,345.50 L785.00,345.50 L785.50,345.50 L786.00,345.50 L786.50,345.50 L787.00,345.50 L787.50,345.50 L788.00,345.50 L788.50,345.50 L789.00,345.50 L789.50,345.50 L790.00,345.50 L790.50,345.50 L791.00,345.50 L791.50,345.50 L792.00,345.50 L792.50,345.50 L793.00,345.50 L793.50,345.50 L794.00,345.50 L794.50,345.50 L795.00,345.50 L795.50,345.50 L796.00,345.50 L796.50,345.50 L797.00,345.50 L797.50,345.50 L798.00,345.50 L798.50,345.50 L799.00,345.50 L799.50,345.50 L800.00,345.50 L800.50,345.50 L801.00,345.50 L801.50,345.50 L802.00,345.50 L802.50,345.50 L803.00,345.50 L803.50,345.50 L804.00,345.50 L804.50,345.50 L805.00,345.50 L805.50,345.50 L806.00,345.50 L806.50,345.50 L807.00,345.50 L807.50,345.50 L808.00,345.50 L808.50,345.50 L809.00,345.50 L809.50,345.50 L810.00,345.50 L810.50,345.50 L811.00,345.50 L811.50,345.50 L812.00,345.50 L812.50,345.50 L813.00,345.50 L813.50,345.50 L814.00,345.50 L814.50,345.50 L815.00,345.50 L815.50,345.50 L816.00,345.50 L816.50,345.50 L817.00,345.50 L817.50,345.50 L818.00,345.50 L818.50,345.50 L819.00,345.50 L819.50,345.50 L820.00,345.50 L820.50,345.50 L821.00,345.50 L821.50,345.50 L822.00,345.50 L822.50,345.50 L823.00,345.50 L823.50,345.50 L824.00,345.50 L824.50,345.50 L825.00,345.50 L825.50,345.50 L826.00,345.50 L826.50,345.50 L827.00,345.50 L827.50,345.50 L828.00,345.50 L828.50,345.50 L829.00,345.50 L829.50,345.50 L830.00,345.50 L830.50,345.50 L831.00,345.50 L831.50,345.50 L832.00,345.50 L832.50,345.50 L833.00,345.50 L833.50,345.50 L834.00,345.50 L834.50,345.50 L835.00,345.50 L835.50,345.50 L836.00,345.50" fill="none" stroke="#dcc848" stroke-width="1.6" shape-rendering="auto" stroke-linejoin="round"/>
<path d="M2,698.5 L835,698.5" stroke="#dcc848" stroke-width="1.6" shape-rendering="auto"/>
<rect x="613.5" y="138.5" width="205" height="27" fill="#000" stroke="#c8c8c8" stroke-width="1"/>
<path d="M618,159.5 L633.5,159.5 L633.5,147.5 L648.5,147.5" fill="none" stroke="#dcc848" stroke-width="1.6" shape-rendering="auto"/>
<rect x="820" y="128" width="16" height="18" fill="#2b2b2b"/>
<rect x="821.5" y="130.5" width="18" height="14.5" fill="#2b2b2b" stroke="#f0f0f0" stroke-width="1"/>
<rect x="822" y="134" width="17" height="1" fill="#f0f0f0"/>
<path d="M830.5,136 L834,140 L831,140 L831,144.5 L830,144.5 L830,140 L827,140 Z" fill="#f0f0f0" shape-rendering="auto"/>
</svg>
<div class="t" style="left:683px;top:143px;font-size:16.3px;color:#b8b8b8">&lt;TorqueDemand&gt;</div>

<!-- window borders -->
<div class="a" style="left:0;top:1px;width:2px;height:758px;background:#b0b0b0"></div>
<div class="a" style="left:842px;top:1px;width:1px;height:758px;background:#b4b4b4"></div>
</body></html>
